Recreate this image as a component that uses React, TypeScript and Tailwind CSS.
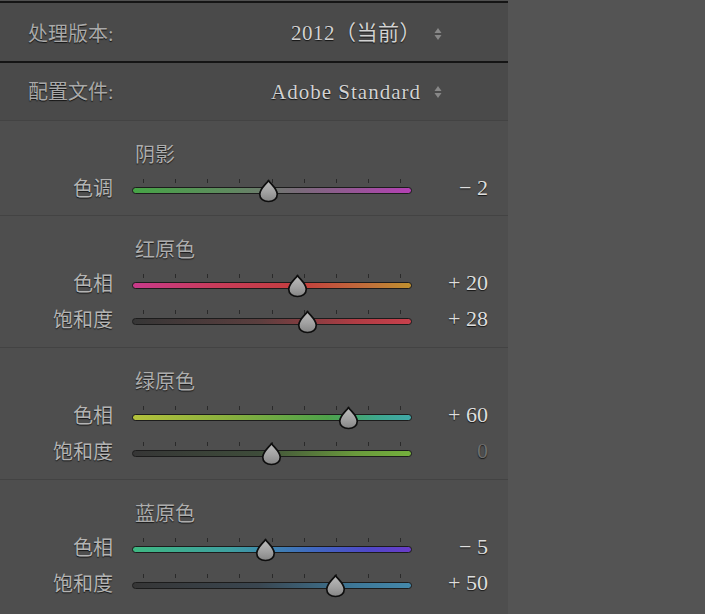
import React from "react";

const FONT = '"Liberation Serif", "Noto Sans CJK SC", serif';

type SliderDef = {
  label: string;
  value: number;
  gradient: string;
};

type Section = {
  title: string;
  sliders: SliderDef[];
  last?: boolean;
};

const sections: Section[] = [
  {
    title: "阴影",
    sliders: [
      {
        label: "色调",
        value: -2,
        gradient: "linear-gradient(90deg,#46a546 0%,#5f8a5f 35%,#7a6a7a 60%,#b440b4 100%)",
      },
    ],
  },
  {
    title: "红原色",
    sliders: [
      {
        label: "色相",
        value: 20,
        gradient: "linear-gradient(90deg,#c83a8a 0%,#c83c5a 30%,#c43e3e 60%,#c0703a 85%,#c0902e 100%)",
      },
      {
        label: "饱和度",
        value: 28,
        gradient: "linear-gradient(90deg,#363636 0%,#5a3e3e 45%,#b03c44 80%,#c8404c 100%)",
      },
    ],
  },
  {
    title: "绿原色",
    sliders: [
      {
        label: "色相",
        value: 60,
        gradient: "linear-gradient(90deg,#b4c23c 0%,#88b03e 35%,#4ea24a 70%,#3ea88e 88%,#40a8a8 100%)",
      },
      {
        label: "饱和度",
        value: 0,
        gradient: "linear-gradient(90deg,#363636 0%,#3e4c3a 45%,#6a9a3c 80%,#74b03c 100%)",
      },
    ],
  },
  {
    title: "蓝原色",
    sliders: [
      {
        label: "色相",
        value: -5,
        gradient: "linear-gradient(90deg,#3eb882 0%,#3ea0a0 35%,#4068c0 65%,#5048c8 85%,#6a3cc8 100%)",
      },
      {
        label: "饱和度",
        value: 50,
        gradient: "linear-gradient(90deg,#363636 0%,#3a4650 45%,#3e7898 80%,#4488aa 100%)",
      },
    ],
    last: true,
  },
];

function formatValue(v: number) {
  if (v === 0) return "0";
  if (v > 0) return `+ ${v}`;
  return `− ${Math.abs(v)}`;
}

function UpDown() {
  return (
    <svg width="10" height="16" viewBox="0 0 10 16" className="shrink-0">
      <path d="M1.5 7 L5 2 L8.5 7 Z" fill="#888888" />
      <path d="M1.5 9 L5 14 L8.5 9 Z" fill="#888888" />
    </svg>
  );
}

function Thumb({ left, top }: { left: number; top: number }) {
  return (
    <svg
      width="21"
      height="24"
      viewBox="0 0 20 23"
      className="absolute"
      style={{ left: left - 10.5, top }}
    >
      <defs>
        <linearGradient id="thumbg" x1="0" y1="0" x2="0" y2="1">
          <stop offset="0" stopColor="#bdbdbd" />
          <stop offset="0.55" stopColor="#a2a2a2" />
          <stop offset="1" stopColor="#858585" />
        </linearGradient>
      </defs>
      <path
        d="M10 1.2 C11.6 4.4 18.4 9.2 18.4 14.6 C18.4 19 14.6 21.6 10 21.6 C5.4 21.6 1.6 19 1.6 14.6 C1.6 9.2 8.4 4.4 10 1.2 Z"
        fill="url(#thumbg)"
        stroke="#0e0e0e"
        strokeWidth="1.6"
        strokeLinejoin="round"
      />
    </svg>
  );
}

const TICKS = [11, 43, 75, 107, 139.5, 172, 204, 236, 268];

function SliderRow({ s }: { s: SliderDef }) {
  const center = 139.5 + s.value * 1.285;
  const trackCenter = 21;
  return (
    <div className="flex h-[36px] shrink-0 items-center">
      <div
        className="w-[113px] pt-[4px] text-right text-[20px] leading-none text-[#b4b4b4] [text-shadow:0_1px_1px_rgba(0,0,0,0.75)]"
        style={{ fontFamily: FONT }}
      >
        {s.label}
      </div>
      <div className="relative ml-[19px] h-[36px] w-[280px]">
        {TICKS.map((t, i) => (
          <div
            key={i}
            className="absolute h-[4px] w-px bg-[#2a2a2a]"
            style={{ left: t, top: trackCenter - 11 }}
          />
        ))}
        <div
          className="absolute left-0 right-0 h-[7px] rounded-full border border-[#1c1c1c]"
          style={{ top: trackCenter - 3.5, background: s.gradient }}
        />
        <Thumb left={center} top={trackCenter - 11} />
      </div>
      <div
        className={
          "w-[76px] pt-[2px] text-right text-[22px] leading-none [text-shadow:0_1px_1px_rgba(0,0,0,0.75)] " +
          (s.value === 0 ? "text-[#6e6e6e]" : "text-[#dedede]")
        }
        style={{ fontFamily: FONT }}
      >
        {formatValue(s.value)}
      </div>
    </div>
  );
}

function SectionBlock({ sec, first }: { sec: Section; first: boolean }) {
  return (
    <div
      className={
        "flex shrink-0 flex-col border-t border-[#434343] pt-[18px] " +
        (first ? "pb-[10px]" : sec.last ? "pb-[20px]" : "pb-[11px]")
      }
    >
      <div
        className="flex h-[30px] shrink-0 items-center pl-[135px] pt-[2px] text-[20px] leading-none text-[#adadad] [text-shadow:0_1px_1px_rgba(0,0,0,0.7)]"
        style={{ fontFamily: FONT }}
      >
        {sec.title}
      </div>
      {sec.sliders.map((s, i) => (
        <SliderRow key={i} s={s} />
      ))}
    </div>
  );
}

export default function App() {
  return (
    <div className="flex h-[614px] w-[705px] overflow-hidden bg-[#545454]">
      <div className="flex w-[508px] shrink-0 flex-col overflow-hidden bg-[#4e4e4e]">
        <div className="h-px shrink-0 bg-[#505050]" />
        <div className="h-[2px] shrink-0 bg-[#151515]" />
        <div className="flex h-[58px] shrink-0 items-center bg-[#4a4a4a] pl-[28px] pr-[65px] pt-[3px]">
          <div
            className="flex-1 text-[20px] leading-none text-[#a9a9a9] [text-shadow:0_1px_1px_rgba(0,0,0,0.75)]"
            style={{ fontFamily: FONT }}
          >
            处理版本:
          </div>
          <div
            className="text-[21px] leading-none tracking-[0.5px] text-[#d2d2d2] [text-shadow:0_1px_1px_rgba(0,0,0,0.75)]"
            style={{ fontFamily: FONT }}
          >
            2012（当前）
          </div>
          <div className="ml-[12px]">
            <UpDown />
          </div>
        </div>
        <div className="h-[2px] shrink-0 bg-[#151515]" />
        <div className="flex h-[57px] shrink-0 items-center bg-[#4a4a4a] pl-[28px] pr-[65px] pt-[1px]">
          <div
            className="flex-1 text-[20px] leading-none text-[#a9a9a9] [text-shadow:0_1px_1px_rgba(0,0,0,0.75)]"
            style={{ fontFamily: FONT }}
          >
            配置文件:
          </div>
          <div
            className="text-[21px] leading-none tracking-[1px] text-[#d2d2d2] [text-shadow:0_1px_1px_rgba(0,0,0,0.75)]"
            style={{ fontFamily: FONT }}
          >
            Adobe Standard
          </div>
          <div className="ml-[12px]">
            <UpDown />
          </div>
        </div>
        {sections.map((sec, i) => (
          <SectionBlock key={i} sec={sec} first={i === 0} />
        ))}
      </div>
    </div>
  );
}
